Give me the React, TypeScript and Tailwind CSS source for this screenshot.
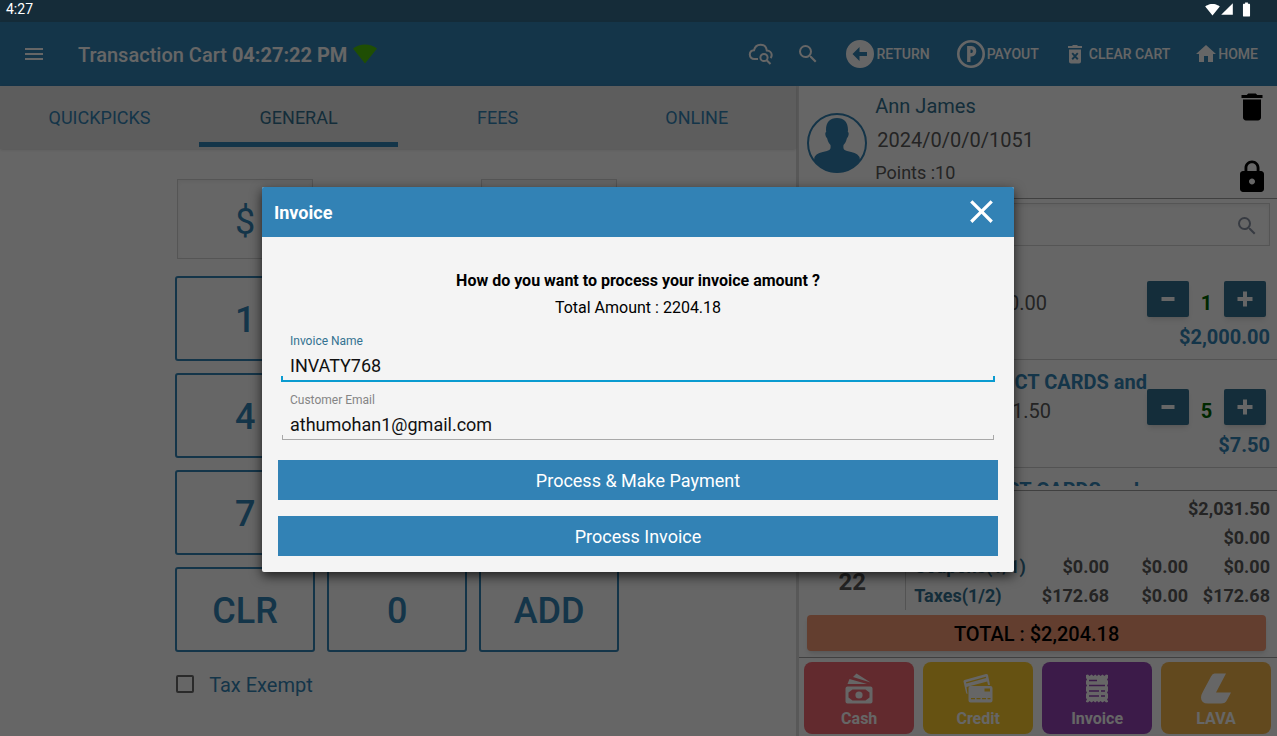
import React from "react";
import {
  MdClose,
  MdDelete,
  MdHome,
  MdLock,
  MdMenu,
  MdSearch,
  MdSignalCellular4Bar,
  MdSignalWifi4Bar,
  MdBatteryFull,
} from "react-icons/md";

function CloudSearchIcon() {
  return (
    <svg width="26" height="24" viewBox="0 0 26 24" fill="none" stroke="currentColor" strokeWidth="2" aria-hidden="true">
      <path d="M10 17H6.500C3.500 17 1.800 15 1.800 12.600C1.800 10.200 3.600 8.500 6 8.300C6.800 5 9.300 2.700 12.500 2.700C15.800 2.700 18.300 5 18.800 8.600C21.600 8.700 23.700 10.500 23.700 13C23.700 14.200 23.300 15.200 22.600 16" />
      <circle cx="16" cy="15.500" r="3.600" />
      <path d="M18.700 18.200L22.500 22" />
    </svg>
  );
}

function ReturnIcon() {
  return (
    <svg width="28" height="28" viewBox="0 0 28 28" aria-hidden="true">
      <path
        fill="currentColor"
        fillRule="evenodd"
        d="M14 0A14 14 0 1 0 14 28A14 14 0 1 0 14 0ZM6.500 14L13.500 7V12H21V16H13.500V21Z"
      />
    </svg>
  );
}

function PayoutIcon() {
  return (
    <svg width="28" height="28" viewBox="0 0 28 28" fill="none" stroke="currentColor" aria-hidden="true">
      <circle cx="14" cy="14" r="12.700" strokeWidth="2.600" />
      <path strokeWidth="3.400" d="M11.800 22V7.700H14.500C18.600 7.700 18.600 14.700 14.500 14.700H12.500" />
    </svg>
  );
}

function ClearCartIcon() {
  return (
    <svg width="16" height="20" viewBox="0 0 16 20" aria-hidden="true">
      <path fill="currentColor" d="M1 2H5L6 1H10L11 2H15V4H1Z" />
      <path
        fill="currentColor"
        fillRule="evenodd"
        d="M2 5.500H14V17.500A2 2 0 0 1 12 19.500H4A2 2 0 0 1 2 17.500ZM4.500 9.800L6.800 12.200L4.500 14.600L5.900 16L8 13.700L10.100 16L11.500 14.600L9.200 12.200L11.500 9.800L10.100 8.400L8 10.700L5.900 8.400Z"
      />
    </svg>
  );
}

function SignalFan() {
  return (
    <svg width="24" height="20" viewBox="0 0 24 20" aria-hidden="true">
      <path fill="#4fc40c" d="M0 4.500C7 -1 17 -1 24 4.500L12 19.500Z" />
    </svg>
  );
}

function Avatar() {
  return (
    <svg width="60" height="60" viewBox="0 0 60 60" className="shrink-0" aria-hidden="true">
      <circle cx="30" cy="30" r="29" fill="none" stroke="#3282b4" strokeWidth="2" />
      <path
        fill="#3282b4"
        d="M30 5C37 5 41 9 41 17L40.800 19C42.500 19.500 41.500 24 40 25C39 29 37.500 31 36.500 32C36 36 37 37 40 38C46 39.500 50 40 52.500 44L53 47.500C48 55 39 59.500 30 59.500C21 59.500 12 55 7 47.500L7.500 44C10 40 14 39.500 20 38C23 37 24 36 23.500 32C22.500 31 21 29 20 25C18.500 24 17.500 19.500 19.200 19L19 17C19 9 23 5 30 5Z"
      />
    </svg>
  );
}

function CashIcon() {
  return (
    <svg width="28" height="32" viewBox="0 0 28 32" fill="currentColor" aria-hidden="true">
      <path d="M8 4L11.500 0.500L25.500 9.500Z" />
      <path d="M2.500 11L4.500 6L22 11Z" />
      <path
        fillRule="evenodd"
        d="M2.500 13.500H25.500Q27.500 13.500 27.500 15.500V28.500Q27.500 30.500 25.500 30.500H2.500Q0.500 30.500 0.500 28.500V15.500Q0.500 13.500 2.500 13.500ZM7.500 16.500L3.500 19.500V24.500L7.500 27.500H20.500L24.500 24.500V19.500L20.500 16.500Z"
      />
      <circle cx="14" cy="22" r="3.600" />
    </svg>
  );
}

function CreditIcon() {
  return (
    <svg width="30" height="32" viewBox="0 0 30 32" fill="currentColor" aria-hidden="true">
      <path
        fillRule="evenodd"
        d="M1.500 7L23 1Q24.500 0.800 25 2L27 12H25L24.200 8.500L3.500 14L4.500 21Q3.500 21 3 19.500L0.500 8.500Q0.500 7.300 1.500 7ZM3 9.200L3.300 10.500L23.200 5L22.900 3.700Z"
      />
      <path
        fillRule="evenodd"
        d="M7.500 13H27.500Q29.500 13 29.500 15V27.500Q29.500 29.500 27.500 29.500H7.500Q5.500 29.500 5.500 27.500V15Q5.500 13 7.500 13ZM21.500 15.500V18.500H27V15.500ZM8 25V26.200H12V25ZM13.500 25V26.200H17.500V25ZM19 25V26.200H23V25ZM24.500 25V26.200H27.500V25Z"
      />
    </svg>
  );
}

function InvoiceIcon() {
  return (
    <svg width="24" height="32" viewBox="0 0 24 32" aria-hidden="true">
      <path
        fill="currentColor"
        d="M1 2L3 1.500L4.500 3L6.500 1.500L8.500 3L10.200 1.500L12 3L13.800 1.500L15.500 3L17.500 1.500L19.500 3L21 1.500L23 2V5L22 6.500L23 8V11L22 12.500L23 14V18L22 19.500L23 21V25L22 26.500L23 28V29L21 29.500L19.500 28L17.500 29.500L15.500 28L13.800 29.500L12 28L10.200 29.500L8.500 28L6.500 29.500L4.500 28L3 29.500L1 29V28L2 26.500L1 25V21L2 19.500L1 18V14L2 12.500L1 11V8L2 6.500L1 5Z"
      />
      <path stroke="#9644b6" strokeWidth="1.500" d="M4 7.500H12M4 12.500H20M4 18H14M16 18H20M4 23H14M16 23H20" />
    </svg>
  );
}

function LavaIcon() {
  return (
    <svg width="30" height="32" viewBox="0 0 30 32" aria-hidden="true">
      <path fill="currentColor" d="M13.500 0.500H25L15 19.500H30L26 27Q24.500 30.500 20 30.500H7Q0 30.500 0 24.500Q0 22 2 18.500L10 3.500Q11.500 0.500 13.500 0.500Z" />
    </svg>
  );
}

function StatusBar() {
  return (
    <div className="flex h-[22px] shrink-0 items-center justify-between bg-[#152c39] px-1.5 pb-1 text-sm text-white">
      <span className="leading-4">4:27</span>
      <div className="mr-4 flex items-center">
        <MdSignalWifi4Bar size={15} />
        <MdSignalCellular4Bar size={14} />
        <MdBatteryFull size={17} className="ml-1" />
      </div>
    </div>
  );
}

function Header() {
  const action = "flex items-center text-sm font-medium";
  return (
    <header className="flex h-16 shrink-0 items-center justify-between bg-[#3484b6] pr-[19px] pl-[22px] text-white shadow">
      <div className="flex items-center">
        <button aria-label="Menu">
          <MdMenu size={24} />
        </button>
        <h1 className="ml-8 pt-0.5 text-xl font-medium">
          Transaction Cart <span className="font-bold">04:27:22 PM</span>
        </h1>
        <span className="ml-1.5">
          <SignalFan />
        </span>
      </div>
      <div className="flex items-center">
        <button aria-label="Cloud search">
          <CloudSearchIcon />
        </button>
        <button aria-label="Search" className="ml-[22px]">
          <MdSearch size={24} />
        </button>
        <button className={`${action} ml-[26px] gap-0.5`}>
          <ReturnIcon />
          RETURN
        </button>
        <button className={`${action} ml-[27px] gap-0.5`}>
          <PayoutIcon />
          PAYOUT
        </button>
        <button className={`${action} ml-7 gap-1.5`}>
          <ClearCartIcon />
          CLEAR CART
        </button>
        <button className={`${action} ml-6`}>
          <MdHome size={24} />
          HOME
        </button>
      </div>
    </header>
  );
}

const tabs = ["QUICKPICKS", "GENERAL", "FEES", "ONLINE"];
const keys = ["1", "2", "3", "4", "5", "6", "7", "8", "9", "CLR", "0", "ADD"];

function Keypad() {
  return (
    <section className="flex min-w-0 flex-[5] flex-col border-r-[3px] border-[#dcdcdc] bg-white">
      <nav className="grid h-[63px] shrink-0 grid-cols-4 bg-[#e9e9e9] shadow-sm">
        {tabs.map((tab) => (
          <button
            key={tab}
            className={
              tab === "GENERAL"
                ? "mb-0.5 border-b-[5px] border-[#3484b6] pt-[7px] text-lg text-[#327291]"
                : "mb-0.5 pt-0.5 text-lg text-[#3484b6]"
            }
          >
            {tab}
          </button>
        ))}
      </nav>
      <div className="pr-0.5">
        <div className="mx-auto w-[444px] pt-[30px]">
          <div className="flex justify-between px-0.5">
            <div className="flex h-20 w-[136px] items-center justify-center border border-[#d5d5d5] pt-1.5 text-4xl text-[#3484b6] shadow-inner">
              $
            </div>
            <div className="h-20 w-[136px] border border-[#d5d5d5] shadow-inner" />
          </div>
          <div className="mt-[17px] grid grid-cols-3 gap-3">
            {keys.map((key) => (
              <button
                key={key}
                className="h-[85px] rounded-[3px] border-2 border-[#3484b6] pt-0.5 text-4xl font-medium text-[#3484b6]"
              >
                {key}
              </button>
            ))}
          </div>
          <label className="mt-4 flex h-8 items-center gap-[15px] text-xl text-[#3484b6]">
            <input type="checkbox" className="ml-px size-[18px] appearance-none rounded-xs border-2 border-[#6a6a6a]" />
            <span className="pt-0.5">Tax Exempt</span>
          </label>
        </div>
      </div>
    </section>
  );
}

type Item = {
  title: string;
  titlePad: string;
  price?: string;
  pricePad?: string;
  qty?: number;
  total?: string;
};

const items: Item[] = [
  { title: "GIFT CARD", titlePad: "pr-40", price: "$2,000.00", pricePad: "pr-25", qty: 1, total: "$2,000.00" },
  { title: "PRODUCT CARDS and", titlePad: "pr-0", price: "$1.50", pricePad: "pr-24", qty: 5, total: "$7.50" },
  { title: "PRODUCT CARDS and", titlePad: "pr-2" },
];

function CartItem({ item }: { item: Item }) {
  const step = "flex h-9 w-[42px] items-center justify-center rounded-xs bg-[#337291] text-white shadow-md";
  return (
    <li className="flex h-[108px] border-b border-[#cfcfcf] text-xl leading-6">
      <div className="min-w-0 flex-1 pt-2.5 text-right whitespace-nowrap">
        <p className={`${item.titlePad} font-bold text-[#3484b6]`}>{item.title}</p>
        {item.price && <p className={`${item.pricePad} mt-[5px] text-[#5a5a5a]`}>{item.price}</p>}
      </div>
      <div className="w-[130px] pt-[29px]">
        {item.qty && (
          <div className="mr-[11px] flex items-center justify-between">
            <button aria-label="Decrease quantity" className={step}>
              <svg width="16" height="16" viewBox="0 0 16 16" aria-hidden="true">
                <path stroke="currentColor" strokeWidth="4" d="M1.500 8H14.500" />
              </svg>
            </button>
            <span className="pt-2 font-bold text-[#006400]">{item.qty}</span>
            <button aria-label="Increase quantity" className={step}>
              <svg width="16" height="16" viewBox="0 0 16 16" aria-hidden="true">
                <path stroke="currentColor" strokeWidth="4" d="M0.500 8H15.500M8 0.500V15.500" />
              </svg>
            </button>
          </div>
        )}
        {item.total && <p className="mt-2 pr-[7px] text-right font-bold text-[#3484b6]">{item.total}</p>}
      </div>
    </li>
  );
}

const summary = [
  { label: "SubTotal", cells: ["", "", "$2,031.50"] },
  { label: "Discount", cells: ["", "", "$0.00"] },
  { label: "Coupons(1/1)", cells: ["$0.00", "$0.00", "$0.00"] },
  { label: "Taxes(1/2)", cells: ["$172.68", "$0.00", "$172.68"] },
];

const payments = [
  { label: "Cash", color: "bg-[#f56973]", Icon: CashIcon },
  { label: "Credit", color: "bg-[#ffcd2d]", Icon: CreditIcon },
  { label: "Invoice", color: "bg-[#9644b6]", Icon: InvoiceIcon },
  { label: "LAVA", color: "bg-[#f5b64d]", Icon: LavaIcon },
];

function Cart() {
  return (
    <aside className="flex min-w-0 flex-[3] flex-col bg-white">
      <div className="flex h-[113px] shrink-0 border-b border-[#a0a0a0] pr-[7px] pl-2">
        <div className="flex items-center pt-0.5">
          <Avatar />
        </div>
        <div className="ml-2 flex-1 text-xl text-[#5a5a5a]">
          <p className="pt-1.5 text-[#337291]">Ann James</p>
          <p className="mt-1.5 ml-0.5">2024/0/0/0/1051</p>
          <p className="mt-[5px] text-lg">Points :10</p>
        </div>
        <div className="flex flex-col items-center justify-between py-[3px] text-black">
          <button aria-label="Remove customer">
            <MdDelete size={36} />
          </button>
          <button aria-label="Lock">
            <MdLock size={36} />
          </button>
        </div>
      </div>
      <div className="mr-[7px] ml-2 mt-1 flex h-[43px] shrink-0 items-center border border-[#d5d5d5] pt-0.5 pr-2.5 shadow-inner">
        <input aria-label="Search items" className="h-full min-w-0 flex-1 px-2 text-lg outline-none" />
        <MdSearch size={24} color="#8a93a5" />
      </div>
      <ul className="mt-1.5 mb-1 min-h-0 flex-1 overflow-hidden">
        {items.map((item, i) => (
          <CartItem key={i} item={item} />
        ))}
      </ul>
      <div className="border-t border-[#a0a0a0] pt-[3px]">
        <div className="flex text-lg text-[#5a5a5a]">
          <div className="flex w-[107px] flex-col items-center justify-end border-r border-[#d0d0d0] pb-3 text-2xl font-bold">
            22
          </div>
          <table className="mr-[7px] ml-2 flex-1 font-bold">
            <tbody>
              {summary.map((row) => (
                <tr key={row.label} className="h-[29px] text-right leading-7">
                  <th scope="row" className="w-[112px] text-left font-bold text-[#337291]">
                    {row.label}
                  </th>
                  <td>{row.cells[0]}</td>
                  <td className="w-[79px]">{row.cells[1]}</td>
                  <td className="w-20">{row.cells[2]}</td>
                </tr>
              ))}
            </tbody>
          </table>
        </div>
        <div className="mt-[5px] mr-[11px] ml-2 flex h-9 items-center justify-center rounded bg-[#f79b75] pt-0.5 text-xl font-medium text-black shadow-md">
          TOTAL : $2,204.18
        </div>
      </div>
      <div className="mt-1.5 grid grid-cols-4 gap-[9px] border-t border-[#a0a0a0] pt-1 pr-1.5 pb-0.5 pl-[5px]">
        {payments.map(({ label, color, Icon }) => (
          <button
            key={label}
            className={`${color} flex h-[72px] flex-col items-center justify-end rounded-lg pb-[3px] font-bold text-white`}
          >
            <Icon />
            <span className="mt-0.5 leading-6">{label}</span>
          </button>
        ))}
      </div>
    </aside>
  );
}

function InvoiceDialog() {
  const process = "h-10 w-full bg-[#3282b5] pt-0.5 text-lg text-white";
  const field = "mt-0.5 block h-7 w-full px-[9px] pt-0.5 text-lg text-[#111] outline-none";
  return (
    <div
      role="dialog"
      aria-modal="true"
      aria-labelledby="invoice-title"
      className="w-[752px] max-w-full rounded-xs bg-[#f4f4f4] shadow-[0_4px_12px_rgba(0,0,0,0.7)]"
    >
      <div className="flex h-[50px] items-center justify-between rounded-t-xs bg-[#3282b5] pr-[13px] pl-3 text-white">
        <h2 id="invoice-title" className="pt-0.5 text-lg font-bold">
          Invoice
        </h2>
        <button aria-label="Close">
          <MdClose size={39} />
        </button>
      </div>
      <form className="px-4 pt-8 pb-4">
        <p className="text-center font-bold text-black">How do you want to process your invoice amount ?</p>
        <p className="mt-[3px] text-center text-black">Total Amount : 2204.18</p>
        <div className="mx-[3px] mt-[13px]">
          <label htmlFor="invoice-name" className="block px-[9px] text-xs text-[#337291]">
            Invoice Name
          </label>
          <input id="invoice-name" defaultValue="INVATY768" className={field} />
          <div className="-mt-[3px] h-1.5 border-x-2 border-b-2 border-[#0a9bd0]" />
        </div>
        <div className="mx-[3px] mt-2.5">
          <label htmlFor="customer-email" className="block px-[9px] text-xs text-[#858585]">
            Customer Email
          </label>
          <input id="customer-email" type="email" defaultValue="athumohan1@gmail.com" className={field} />
          <div className="mx-px -mt-[3px] h-[5px] border-x border-b border-[#a8a8a8]" />
        </div>
        <div className="mt-5 flex flex-col gap-4">
          <button type="button" className={process}>
            Process &amp; Make Payment
          </button>
          <button type="button" className={process}>
            Process Invoice
          </button>
        </div>
      </form>
    </div>
  );
}

export default function App() {
  return (
    <div className="flex h-screen flex-col font-[Roboto,'Noto_Sans',sans-serif]">
      <StatusBar />
      <div className="relative flex min-h-0 flex-1 flex-col">
        <Header />
        <main className="flex min-h-0 flex-1">
          <Keypad />
          <Cart />
        </main>
        <div className="absolute inset-0 flex items-center justify-center bg-black/60 pr-px">
          <InvoiceDialog />
        </div>
      </div>
    </div>
  );
}
